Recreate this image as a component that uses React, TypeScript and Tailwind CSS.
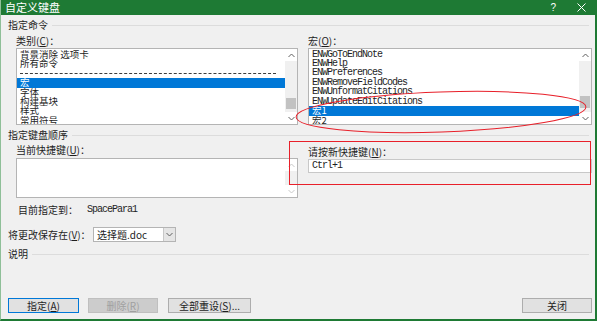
import React from 'react';

const cjk = { fontFamily: '"Noto Sans CJK SC", "Noto Sans", sans-serif' };
const mono = { fontFamily: '"Liberation Mono", "Noto Sans CJK SC", monospace' };

function Chevron({ up, faint }: { up?: boolean; faint?: boolean }) {
  return (
    <svg width="7" height="5" viewBox="0 0 7 5">
      <polyline
        points={up ? '0.5,4 3.5,1 6.5,4' : '0.5,1 3.5,4 6.5,1'}
        fill="none"
        stroke={faint ? '#c8c8c8' : '#606060'}
        strokeWidth="1"
      />
    </svg>
  );
}

function ScrollBar({ before, thumb, faint }: { before: number; thumb: number; faint?: boolean }) {
  return (
    <div className="flex w-[12px] flex-col bg-[#f0f0f0]">
      <div className="flex h-[12px] items-center justify-center bg-white">
        <Chevron up faint={faint} />
      </div>
      <div style={{ height: before }} className="bg-[#f0f0f0]" />
      {thumb > 0 && <div style={{ height: thumb }} className="mx-[1px] bg-[#c2c2c2]" />}
      <div className="flex-1 bg-[#f0f0f0]" />
      <div className="flex h-[12px] items-center justify-center bg-white">
        <Chevron faint={faint} />
      </div>
    </div>
  );
}

function GroupHeader({ title }: { title: string }) {
  return (
    <div className="flex h-[12px] items-center gap-[4px] pr-[6px]">
      <span className="text-[10px] leading-none text-[#1e1e1e]">{title}</span>
      <div className="h-px flex-1 bg-[#dcdcdc]" />
    </div>
  );
}

function Row({ children, selected, isMono }: { children: React.ReactNode; selected?: boolean; isMono?: boolean }) {
  return (
    <div
      className={`flex h-[9.4px] items-center whitespace-nowrap pl-[3px] ${selected ? 'bg-[#0078d7] text-white' : 'text-[#1e1e1e]'} ${isMono ? 'text-[10px] tracking-[-1px]' : 'text-[9.5px]'}`}
      style={isMono ? mono : undefined}
    >
      <span className="leading-none">{children}</span>
    </div>
  );
}

export default function App() {
  const macros = [
    'ENWGoToEndNote',
    'ENWHelp',
    'ENWPreferences',
    'ENWRemoveFieldCodes',
    'ENWUnformatCitations',
    'ENWUpdateEditCitations',
  ];

  return (
    <div className="relative h-[321px] w-[600px] overflow-hidden bg-white" style={cjk}>
      <div className="flex h-[321px] w-[597px] flex-col border-b-2 border-l border-r-2 border-b-[#1e7a34] border-l-[#8fbf98] border-r-[#1e7a34] bg-[#f0f0f0]">
        {/* title bar */}
        <div className="flex h-[15px] items-center bg-[#1e7a34] pl-[4px] pr-[9px] text-white">
          <span className="text-[11px] leading-none">自定义键盘</span>
          <div className="flex-1" />
          <span className="mr-[21px] text-[10px] leading-none" style={{ fontFamily: '"Liberation Sans", sans-serif' }}>?</span>
          <svg width="9" height="9" viewBox="0 0 9 9">
            <path d="M0.5 0.5 L8.5 8.5 M8.5 0.5 L0.5 8.5" stroke="#ffffff" strokeWidth="1" />
          </svg>
        </div>

        <div className="flex flex-col pl-[7px]">
          <div className="mt-[4px]">
            <GroupHeader title="指定命令" />
          </div>

          <div className="mt-[5px] flex gap-[10px] pl-[8px]">
            {/* categories */}
            <div className="flex w-[282px] flex-col">
              <div className="h-[10px] text-[10px] leading-none text-[#1e1e1e]">
                类别(<u>C</u>)：
              </div>
              <div className="mt-[2px] flex h-[77px] border border-[#b4b4b4] bg-white">
                <div className="flex-1 overflow-hidden pt-px">
                  <Row>背景消除 选项卡</Row>
                  <Row>所有命令</Row>
                  <div className="flex h-[9.4px] items-center pl-[3px]">
                    <div className="h-px w-[256px] border-t border-dashed border-[#3c3c3c]" />
                  </div>
                  <Row selected>宏</Row>
                  <Row>字体</Row>
                  <Row>构建基块</Row>
                  <Row>样式</Row>
                  <Row>常用符号</Row>
                </div>
                <ScrollBar before={37} thumb={11} />
              </div>
            </div>

            {/* macros */}
            <div className="flex w-[284px] flex-col">
              <div className="h-[10px] text-[10px] leading-none text-[#1e1e1e]">
                宏(<u>O</u>)：
              </div>
              <div className="mt-[2px] flex h-[77px] border border-[#b4b4b4] bg-white">
                <div className="flex-1 overflow-hidden pt-px">
                  {macros.map((m) => (
                    <Row key={m} isMono>
                      {m}
                    </Row>
                  ))}
                  <Row selected>宏1</Row>
                  <Row>宏2</Row>
                </div>
                <ScrollBar before={35} thumb={12} />
              </div>
            </div>
          </div>

          <div className="mt-[4px]">
            <GroupHeader title="指定键盘顺序" />
          </div>

          <div className="flex gap-[10px] pl-[8px]">
            <div className="flex w-[282px] flex-col">
              <div className="mt-[4px] h-[10px] text-[10px] leading-none text-[#1e1e1e]">
                当前快捷键(<u>U</u>)：
              </div>
              <div className="mt-[3px] flex h-[40px] border border-[#b4b4b4] bg-white">
                <div className="flex-1" />
                <ScrollBar before={0} thumb={0} faint />
              </div>
            </div>
            <div className="flex w-[284px] flex-col">
              <div className="mt-[6px] h-[10px] text-[10px] leading-none text-[#1e1e1e]">
                请按新快捷键(<u>N</u>)：
              </div>
              <div className="mt-[2px] flex h-[14px] items-center border border-[#c8c8c8] bg-white pl-[3px]">
                <span className="text-[10px] leading-none tracking-[-1px] text-[#1e1e1e]" style={mono}>
                  Ctrl+1
                </span>
              </div>
            </div>
          </div>

          <div className="mt-[7px] flex h-[10px] items-center pl-[10px] text-[10px] leading-none text-[#1e1e1e]">
            <span>目前指定到：</span>
            <span className="ml-[9px] tracking-[-1px]" style={mono}>
              SpacePara1
            </span>
          </div>

          <div className="mt-[12px] flex h-[15px] items-center">
            <span className="w-[85px] text-[10px] leading-none text-[#1e1e1e]">
              将更改保存在(<u>V</u>)：
            </span>
            <div className="flex h-[15px] w-[83px] border border-[#b4b4b4] bg-white">
              <div className="flex flex-1 items-center pl-[3px] text-[10px] leading-none text-[#1e1e1e]">
                选择题.doc
              </div>
              <div className="flex w-[12px] items-center justify-center border-l border-[#c8c8c8] bg-[#e5e5e5]">
                <Chevron />
              </div>
            </div>
          </div>

          <div className="mt-[6px]">
            <GroupHeader title="说明" />
          </div>

          <div className="mt-[38px] flex h-[15px] items-stretch pr-[3px]">
            <button className="flex w-[71px] items-center justify-center border border-[#0078d7] bg-[#e1e1e1] text-[10px] leading-none text-[#1e1e1e]">
              指定(<u>A</u>)
            </button>
            <button className="ml-[9px] flex w-[70px] items-center justify-center border border-[#bfbfbf] bg-[#cccccc] text-[10px] leading-none text-[#a0a0a0]">
              删除(<u>R</u>)
            </button>
            <button className="ml-[10px] flex w-[83px] items-center justify-center border border-[#adadad] bg-[#e1e1e1] text-[10px] leading-none text-[#1e1e1e]">
              全部重设(<u>S</u>)...
            </button>
            <div className="flex-1" />
            <button className="flex w-[70px] items-center justify-center border border-[#adadad] bg-[#e1e1e1] text-[10px] leading-none text-[#1e1e1e]">
              关闭
            </button>
          </div>
        </div>
      </div>

      {/* red annotations drawn over the dialog */}
      <div className="pointer-events-none absolute left-[289px] top-[141px] h-[44px] w-[302px] border border-[#e8202a]" />
      <svg className="pointer-events-none absolute left-0 top-0" width="600" height="321">
        <ellipse
          cx="441"
          cy="112"
          rx="145"
          ry="20"
          transform="rotate(-2 441 112)"
          fill="none"
          stroke="#e8202a"
          strokeWidth="1"
        />
      </svg>
    </div>
  );
}
